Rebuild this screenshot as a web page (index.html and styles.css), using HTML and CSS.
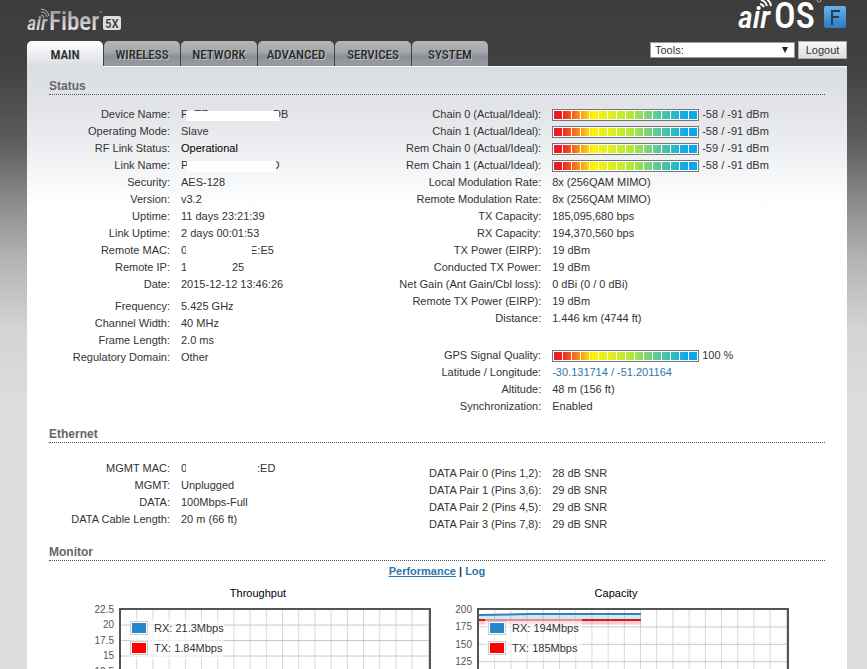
FILE: index.html
```html
<!DOCTYPE html>
<html lang="en">
<head>
    <meta charset="UTF-8">
    <title>airFiber 5X - Main</title>
    <link rel="stylesheet" href="styles.css">
</head>
<body>
<div class="page">
    <header class="header">
        <svg class="logo" width="98" height="27" viewBox="0 0 98 27" role="img" aria-label="airFiber 5X">
            <defs>
                <linearGradient id="silver" x1="0" y1="0" x2="0" y2="1">
                    <stop offset="0" stop-color="#8e8e8e"/>
                    <stop offset="1" stop-color="#ffffff"/>
                </linearGradient>
            </defs>
            <text class="logo-air" x="0" y="23" font-size="20" fill="url(#silver)">air</text>
            <text class="logo-name" x="22" y="23" font-size="25" fill="url(#silver)">Fiber</text>
            <g fill="none" stroke="#b5b5b5" stroke-width="1">
                <path d="M14 8a3 3 0 0 1 3 3M14 5a6 6 0 0 1 6 5M14 2a9 9 0 0 1 8 7"/>
            </g>
            <circle cx="74" cy="5" r="1" fill="#888"/>
            <rect x="76" y="9" width="18" height="14" rx="2" fill="#dedede"/>
            <text class="logo-name" x="78" y="21" font-size="13" fill="#3d3d3d">5X</text>
        </svg>
        <svg class="logo" width="109" height="31" viewBox="0 0 109 31" role="img" aria-label="airOS F">
            <defs>
                <linearGradient id="blue" x1="0" y1="0" x2="0" y2="1">
                    <stop offset="0" stop-color="#62b5ea"/>
                    <stop offset="1" stop-color="#2a7cc5"/>
                </linearGradient>
            </defs>
            <text class="logo-air" x="0" y="28" font-size="32" fill="#fff">air</text>
            <text class="logo-name" x="36" y="28" font-size="36" fill="#fff">OS</text>
            <g fill="none" stroke="#fff" stroke-width="2">
                <path d="M22 4a5 5 0 0 1 4 3M23 0a8 8 0 0 1 6 6M27-2a11 11 0 0 1 6 8"/>
            </g>
            <circle cx="81" cy="0" r="2" fill="none" stroke="#aaa"/>
            <rect x="86" y="6" width="22" height="22" rx="2" fill="url(#blue)"/>
            <path d="M94 25V11h8M94 17h7" fill="none" stroke="#2f3b47" stroke-width="2"/>
        </svg>
    </header>

    <div class="bar">
        <nav class="tabs">
            <a class="tab active" href="#main">MAIN</a>
            <a class="tab" href="#wireless">WIRELESS</a>
            <a class="tab" href="#network">NETWORK</a>
            <a class="tab" href="#advanced">ADVANCED</a>
            <a class="tab" href="#services">SERVICES</a>
            <a class="tab" href="#system">SYSTEM</a>
        </nav>
        <div class="tools">
            <div class="select">
                <select aria-label="Tools">
                    <option>Tools:</option>
                </select>
                <svg class="arrow" width="6" height="6" viewBox="0 0 6 6"><path d="M0 0h6L3 6z" fill="#222"/></svg>
            </div>
            <button class="logout" type="button">Logout</button>
        </div>
    </div>

    <main class="content" id="main">
        <section>
            <h2>Status</h2>
            <div class="columns">
                <div>
                    <dl class="info">
                        <dt>Device Name:</dt><dd><span class="masked name">P&nbsp;&nbsp;TZ</span>DB</dd>
                        <dt>Operating Mode:</dt><dd>Slave</dd>
                        <dt>RF Link Status:</dt><dd class="strong">Operational</dd>
                        <dt>Link Name:</dt><dd><span class="masked link">P</span>O</dd>
                        <dt>Security:</dt><dd>AES-128</dd>
                        <dt>Version:</dt><dd>v3.2</dd>
                        <dt>Uptime:</dt><dd>11 days 23:21:39</dd>
                        <dt>Link Uptime:</dt><dd>2 days 00:01:53</dd>
                        <dt>Remote MAC:</dt><dd><span class="masked mac">0</span>E:E5</dd>
                        <dt>Remote IP:</dt><dd><span class="masked ip">1</span>25</dd>
                        <dt>Date:</dt><dd>2015-12-12 13:46:26</dd>
                    </dl>
                    <dl class="info radio">
                        <dt>Frequency:</dt><dd>5.425 GHz</dd>
                        <dt>Channel Width:</dt><dd>40 MHz</dd>
                        <dt>Frame Length:</dt><dd>2.0 ms</dd>
                        <dt>Regulatory Domain:</dt><dd>Other</dd>
                    </dl>
                </div>
                <div>
                    <dl class="info wide">
                        <dt>Chain 0 (Actual/Ideal):</dt><dd><span class="signal"></span>-58 / -91 dBm</dd>
                        <dt>Chain 1 (Actual/Ideal):</dt><dd><span class="signal"></span>-58 / -91 dBm</dd>
                        <dt>Rem Chain 0 (Actual/Ideal):</dt><dd><span class="signal"></span>-59 / -91 dBm</dd>
                        <dt>Rem Chain 1 (Actual/Ideal):</dt><dd><span class="signal"></span>-58 / -91 dBm</dd>
                        <dt>Local Modulation Rate:</dt><dd>8x (256QAM MIMO)</dd>
                        <dt>Remote Modulation Rate:</dt><dd>8x (256QAM MIMO)</dd>
                        <dt>TX Capacity:</dt><dd>185,095,680 bps</dd>
                        <dt>RX Capacity:</dt><dd>194,370,560 bps</dd>
                        <dt>TX Power (EIRP):</dt><dd>19 dBm</dd>
                        <dt>Conducted TX Power:</dt><dd>19 dBm</dd>
                        <dt>Net Gain (Ant Gain/Cbl loss):</dt><dd>0 dBi (0 / 0 dBi)</dd>
                        <dt>Remote TX Power (EIRP):</dt><dd>19 dBm</dd>
                        <dt>Distance:</dt><dd>1.446 km (4744 ft)</dd>
                    </dl>
                    <dl class="info wide gps">
                        <dt>GPS Signal Quality:</dt><dd><span class="signal"></span>100 %</dd>
                        <dt>Latitude / Longitude:</dt><dd><a href="#map">-30.131714 / -51.201164</a></dd>
                        <dt>Altitude:</dt><dd>48 m (156 ft)</dd>
                        <dt>Synchronization:</dt><dd>Enabled</dd>
                    </dl>
                </div>
            </div>
        </section>

        <section>
            <h2>Ethernet</h2>
            <div class="columns ethernet">
                <dl class="info">
                    <dt>MGMT MAC:</dt><dd><span class="masked mgmt">0</span>:ED</dd>
                    <dt>MGMT:</dt><dd>Unplugged</dd>
                    <dt>DATA:</dt><dd>100Mbps-Full</dd>
                    <dt>DATA Cable Length:</dt><dd>20 m (66 ft)</dd>
                </dl>
                <dl class="info wide pairs">
                    <dt>DATA Pair 0 (Pins 1,2):</dt><dd>28 dB SNR</dd>
                    <dt>DATA Pair 1 (Pins 3,6):</dt><dd>29 dB SNR</dd>
                    <dt>DATA Pair 2 (Pins 4,5):</dt><dd>29 dB SNR</dd>
                    <dt>DATA Pair 3 (Pins 7,8):</dt><dd>29 dB SNR</dd>
                </dl>
            </div>
        </section>

        <section>
            <h2>Monitor</h2>
            <div class="views"><a class="current" href="#performance">Performance</a> | <a href="#log">Log</a></div>
            <div class="charts">
                <figure>
                    <figcaption>Throughput</figcaption>
                    <svg class="chart" width="344" height="152" viewBox="0 0 344 152">
                        <defs>
                            <pattern id="gridA" x="35" y="2" width="16.2" height="15.5" patternUnits="userSpaceOnUse">
                                <path d="M16 0V15.5M0 15H16.2" fill="none" stroke="#c8c8c8"/>
                            </pattern>
                        </defs>
                        <rect x="35" y="1" width="308" height="140" fill="url(#gridA)"/>
                        <rect x="34" y="1" width="310" height="141" fill="none" stroke="#545454" stroke-width="2"/>
                        <g class="ticks">
                            <text x="28" y="5">22.5</text>
                            <text x="28" y="20">20</text>
                            <text x="28" y="36">17.5</text>
                            <text x="28" y="51">15</text>
                            <text x="28" y="67">12.5</text>
                            <text x="28" y="82">10</text>
                            <text x="28" y="98">7.5</text>
                            <text x="28" y="113">5</text>
                            <text x="28" y="129">2.5</text>
                            <text x="28" y="145">0</text>
                        </g>
                        <rect x="44" y="11" width="94" height="40" fill="#fff" fill-opacity=".6"/>
                        <rect x="44.500" y="13.500" width="17" height="13" fill="#fff" stroke="#ccc"/>
                        <rect x="46" y="15" width="14" height="10" fill="#2389ca"/>
                        <rect x="44.500" y="33.500" width="17" height="13" fill="#fff" stroke="#ccc"/>
                        <rect x="46" y="35" width="14" height="10" fill="#f00"/>
                        <text x="68" y="24">RX: 21.3Mbps</text>
                        <text x="68" y="44">TX: 1.84Mbps</text>
                    </svg>
                </figure>
                <figure>
                    <figcaption>Capacity</figcaption>
                    <svg class="chart" width="344" height="152" viewBox="0 0 344 152">
                        <defs>
                            <pattern id="gridB" x="35" y="2" width="16.2" height="17.4" patternUnits="userSpaceOnUse">
                                <path d="M16 0V17.4M0 17H16.2" fill="none" stroke="#c8c8c8"/>
                            </pattern>
                        </defs>
                        <rect x="35" y="1" width="308" height="140" fill="url(#gridB)"/>
                        <path d="M35 9H197" stroke="#2389ca" stroke-opacity=".2" stroke-width="4"/>
                        <path d="M35 7L85 6H197" fill="none" stroke="#2f82b5" stroke-width="2"/>
                        <path d="M35 14H197" stroke="#f00" stroke-opacity=".2" stroke-width="5"/>
                        <path d="M35 12H197" fill="none" stroke="#cc1c22" stroke-width="2"/>
                        <rect x="34" y="1" width="310" height="141" fill="none" stroke="#545454" stroke-width="2"/>
                        <g class="ticks">
                            <text x="28" y="5">200</text>
                            <text x="28" y="22">175</text>
                            <text x="28" y="40">150</text>
                            <text x="28" y="57">125</text>
                            <text x="28" y="75">100</text>
                            <text x="28" y="92">75</text>
                            <text x="28" y="109">50</text>
                            <text x="28" y="127">25</text>
                            <text x="28" y="144">0</text>
                        </g>
                        <rect x="41" y="11" width="97" height="40" fill="#fff" fill-opacity=".5"/>
                        <rect x="44.500" y="13.500" width="17" height="13" fill="#fff" stroke="#ccc"/>
                        <rect x="46" y="15" width="14" height="10" fill="#2389ca"/>
                        <rect x="44.500" y="33.500" width="17" height="13" fill="#fff" stroke="#ccc"/>
                        <rect x="46" y="35" width="14" height="10" fill="#f00"/>
                        <text x="68" y="24">RX: 194Mbps</text>
                        <text x="68" y="44">TX: 185Mbps</text>
                    </svg>
                </figure>
            </div>
        </section>
    </main>
</div>
</body>
</html>
```
FILE: styles.css
```css
*{
    box-sizing: border-box;
    margin: 0;
    padding: 0;
}
body{
    background: #dcdcdc linear-gradient(#3d3d3d 0, #414141 66px, #5c5c5c 140px, #8a8a8a 200px, #b4b4b4 260px, #d4d4d4 330px, #dcdcdc 400px) no-repeat;
    font: 11px/17px Arial, "Liberation Sans", sans-serif;
    color: #333;
}
a{
    color: #2a78b0;
    text-decoration: none;
}
.page{
    padding: 0 20px 0 27px;
}
.header{
    display: flex;
    justify-content: space-between;
    height: 41px;
}
.header .logo:first-child{
    margin-top: 7px;
}
.logo-air{
    font-family: "Roboto Condensed", Roboto, sans-serif;
    font-style: italic;
    font-weight: 500;
}
.logo-name{
    font-family: "Roboto Condensed", Roboto, sans-serif;
    font-weight: 500;
}

/* tabs */
.bar{
    display: flex;
    justify-content: space-between;
    align-items: flex-start;
}
.tabs{
    display: flex;
    gap: 1px;
}
.tab{
    width: 76px;
    height: 25px;
    border-radius: 5px 5px 0 0;
    background: linear-gradient(#b5b5b6, #a5a6a9 45%, #8b8f97 60%, #9a9da4);
    font: 500 13px/27px "Roboto Condensed", Roboto, sans-serif;
    color: #2b2b2b;
    text-align: center;
    text-shadow: 1px 1px 0 #c4c6ca;
}
.tab.active{
    height: 26px;
    margin-bottom: -1px;
    background: linear-gradient(#fff, #dadde3);
    z-index: 1;
}
.tools{
    display: flex;
    align-items: center;
    gap: 3px;
}
.select{
    position: relative;
}
.select select{
    display: block;
    width: 145px;
    height: 16px;
    padding: 0 4px;
    border: 1px solid #999;
    border-radius: 0;
    background: #fff;
    font: inherit;
    line-height: 14px;
    color: #333;
    appearance: none;
}
.arrow{
    position: absolute;
    top: 5px;
    right: 7px;
    pointer-events: none;
}
.logout{
    width: 49px;
    height: 18px;
    border: 1px solid #aaa;
    background: linear-gradient(#f6f6f6, #dedede);
    font: inherit;
    line-height: 14px;
    color: #333;
}

/* content */
.content{
    padding: 11px 22px 20px;
    border-top: 1px solid #fff;
    background: #fff linear-gradient(#dadde3, #e4e6ea 50px, #fff 140px) no-repeat;
}
h2{
    height: 17px;
    border-bottom: 1px dotted #555;
    font-size: 12px;
    line-height: 17px;
    color: #666;
}
.columns{
    display: grid;
    grid-template-columns: 45% 1fr;
    align-items: start;
    padding: 11px 0;
}
.info{
    display: grid;
    grid-template-columns: 121px 1fr;
    column-gap: 11px;
}
.info.wide{
    grid-template-columns: 143px 1fr;
}
.info dt{
    text-align: right;
}
.info dd{
    display: flex;
    align-items: center;
    height: 17px;
    white-space: nowrap;
}
.radio{
    margin-top: 5px;
}
.gps{
    margin-top: 20px;
}
.ethernet{
    padding: 17px 0 11px;
}
.pairs{
    margin-top: 5px;
}
.strong{
    color: #000;
}

/* hidden part of a private value */
.masked{
    position: relative;
}
.masked::after{
    content: "";
    position: absolute;
    top: 4px;
    right: 0;
    bottom: 2px;
    left: 5px;
    background: #fff;
}
.masked.name{
    width: 92px;
}
.masked.name::after{
    top: 5px;
    right: -6px;
}
.masked.link{
    width: 90px;
}
.masked.link::after{
    right: -5px;
    left: 6px;
}
.masked.mac{
    width: 69px;
}
.masked.mac::after{
    right: -2px;
}
.masked.ip{
    width: 51px;
}
.masked.mgmt{
    width: 76px;
}

/* signal level, 16 cells */
.signal{
    width: 147px;
    height: 12px;
    margin-right: 3px;
    padding: 1px;
    border: 1px solid #777;
    background:
        repeating-linear-gradient(90deg, transparent 0 8px, #fff 8px 9px) content-box,
        linear-gradient(90deg, #ee1c25 5%, #f7741d 15%, #fff200 27%, #e4f018 38%, #aee83c 55%, #7ad080 66%, #3cc0b4 80%, #08a8ec 94%) content-box,
        #fff;
}

/* monitor */
.views{
    margin-top: 2px;
    font-weight: bold;
    text-align: center;
}
.views .current{
    text-decoration: underline;
}
.charts{
    display: flex;
    flex-wrap: wrap;
    justify-content: center;
    gap: 14px;
    margin-top: 5px;
}
figcaption{
    height: 23px;
    color: #000;
    text-align: center;
}
.chart{
    display: block;
    fill: #333;
    overflow: visible;
}
.ticks{
    font-size: 10px;
    fill: #555;
    text-anchor: end;
}
```
